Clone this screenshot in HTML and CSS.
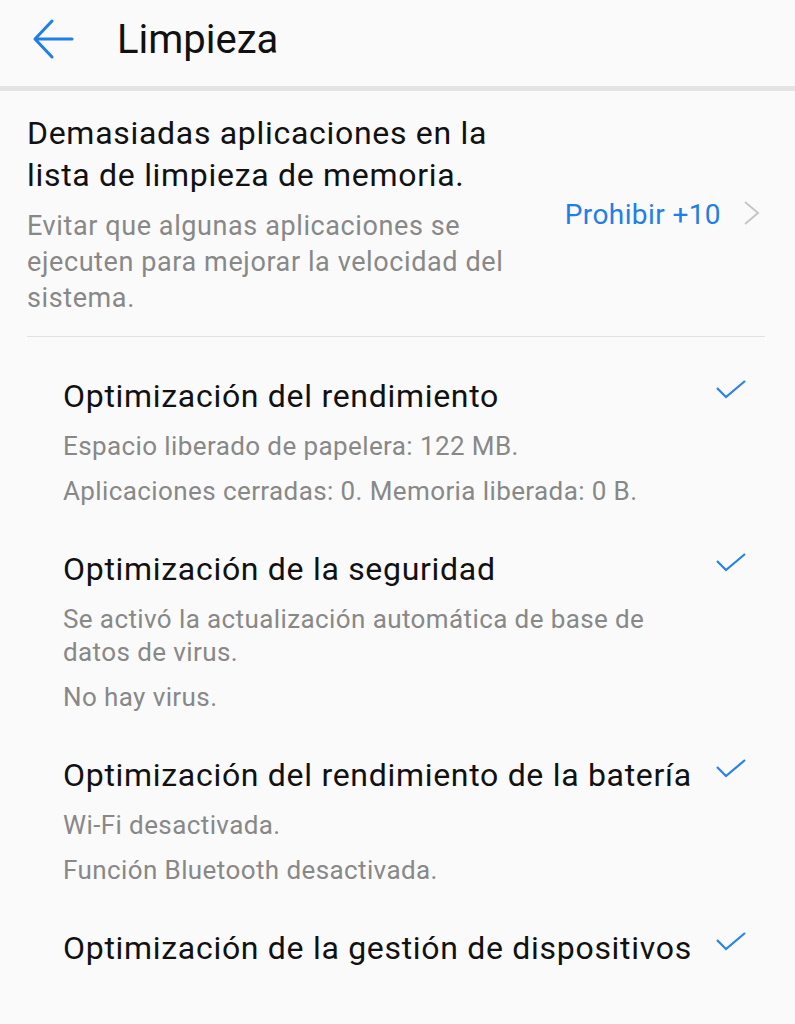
FILE: index.html
```html
<!DOCTYPE html>
<html lang="es">
<head>
    <meta charset="UTF-8">
    <title>Limpieza</title>
    <link rel="stylesheet" href="styles.css">
</head>
<body>
<div class="header">
    <svg class="back" width="44" height="44" viewBox="0 0 44 44">
        <path d="M41 21 H4 M21 3 L4 21 L21 39" fill="none" stroke="#1f7ee8" stroke-width="3" stroke-linecap="round" stroke-linejoin="round"/>
    </svg>
    <h1 class="title">Limpieza</h1>
</div>
<div class="bar"></div>

<div class="notice">
    <div class="notice-text">
        <p class="notice-title">Demasiadas aplicaciones en la lista de limpieza de memoria.</p>
        <p class="notice-desc">Evitar que algunas aplicaciones se ejecuten para mejorar la velocidad del sistema.</p>
    </div>
    <div class="notice-action">
        <span class="link">Prohibir +10</span>
        <svg class="chevron" width="18" height="26" viewBox="0 0 18 26">
            <path d="M2 2 L15 13 L2 24" fill="none" stroke="#c6c6c6" stroke-width="2"/>
        </svg>
    </div>
</div>
<div class="line"></div>

<ul class="results">
    <li class="item">
        <div class="item-head">
            <span class="item-title">Optimización del rendimiento</span>
            <svg class="check" width="32" height="20" viewBox="0 0 32 20"><path d="M2 9 L11 18 L30 2" fill="none" stroke="#2a82e8" stroke-width="2.2"/></svg>
        </div>
        <p class="item-sub">Espacio liberado de papelera: 122 MB.</p>
        <p class="item-sub">Aplicaciones cerradas: 0. Memoria liberada: 0 B.</p>
    </li>
    <li class="item">
        <div class="item-head">
            <span class="item-title">Optimización de la seguridad</span>
            <svg class="check" width="32" height="20" viewBox="0 0 32 20"><path d="M2 9 L11 18 L30 2" fill="none" stroke="#2a82e8" stroke-width="2.2"/></svg>
        </div>
        <p class="item-sub">Se activó la actualización automática de base de datos de virus.</p>
        <p class="item-sub">No hay virus.</p>
    </li>
    <li class="item">
        <div class="item-head">
            <span class="item-title">Optimización del rendimiento de la batería</span>
            <svg class="check" width="32" height="20" viewBox="0 0 32 20"><path d="M2 9 L11 18 L30 2" fill="none" stroke="#2a82e8" stroke-width="2.2"/></svg>
        </div>
        <p class="item-sub">Wi-Fi desactivada.</p>
        <p class="item-sub">Función Bluetooth desactivada.</p>
    </li>
    <li class="item">
        <div class="item-head">
            <span class="item-title">Optimización de la gestión de dispositivos</span>
            <svg class="check" width="32" height="20" viewBox="0 0 32 20"><path d="M2 9 L11 18 L30 2" fill="none" stroke="#2a82e8" stroke-width="2.2"/></svg>
        </div>
    </li>
</ul>
</body>
</html>
```

FILE: styles.css
```css
* {
    padding: 0;
    margin: 0;
}

body {
    background-color: #fafafa;
    font-family: Roboto, "Liberation Sans", sans-serif;
    color: #111;
    width: 795px;
}

.header {
    height: 86px;
    display: flex;
    align-items: center;
}

.back {
    margin-left: 31px;
    margin-top: -7px;
}

.title {
    font-size: 40px;
    font-weight: 400;
    margin-left: 42px;
    margin-top: -8px;
}

.bar {
    height: 5px;
    background-color: #e4e4e4;
}

.notice {
    display: flex;
    align-items: center;
    padding: 0 34px 0 27px;
}

.notice-text {
    width: 500px;
    padding: 21px 0 20px;
}

.notice-title {
    font-size: 32px;
    letter-spacing: 0.7px;
    line-height: 42px;
}

.notice-desc {
    font-size: 27px;
    letter-spacing: 0.6px;
    line-height: 36px;
    color: #888;
    margin-top: 12px;
}

.notice-action {
    flex: 1;
    display: flex;
    justify-content: flex-end;
    align-items: center;
    gap: 22px;
    margin-top: 2px;
}

.link {
    font-size: 28px;
    letter-spacing: 0.4px;
    color: #1f7ee8;
}

.chevron {
    margin-top: -4px;
}

.line {
    height: 1px;
    margin: 0 30px 0 27px;
    background-color: #e2e2e2;
}

.results {
    list-style: none;
    padding: 38px 48px 0 63px;
}

.item {
    padding-bottom: 40px;
}

.item-head {
    display: flex;
    justify-content: space-between;
    align-items: flex-start;
}

.item-title {
    font-size: 32px;
    letter-spacing: 0.7px;
    line-height: 42px;
}

.check {
    margin-top: 4px;
}

.item-sub {
    max-width: 620px;
    font-size: 26px;
    letter-spacing: 0.4px;
    line-height: 33px;
    color: #888;
    margin-top: 13px;
}

.item-sub + .item-sub {
    margin-top: 12px;
}
```
